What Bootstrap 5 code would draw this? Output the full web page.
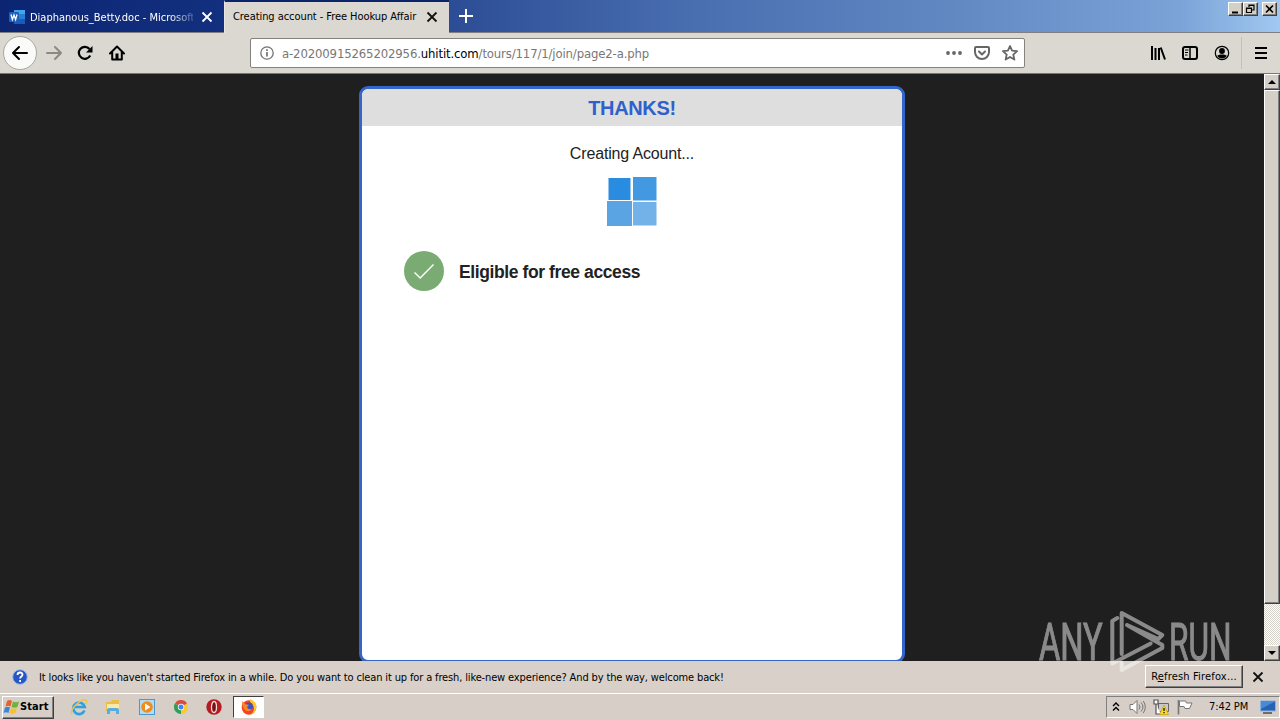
<!DOCTYPE html>
<html lang="en">
<head>
    <meta charset="UTF-8">
    <meta name="viewport" content="width=device-width, initial-scale=1.0">
    <title>Creating account - Free Hookup Affair</title>
    <link href="https://cdn.jsdelivr.net/npm/bootstrap@5.3.0/dist/css/bootstrap.min.css" rel="stylesheet">
    <style>
        body { width: 1280px; height: 720px; overflow: hidden; background: #d6cfc8; color: #000; font: 11px/14px "DejaVu Sans Condensed", "DejaVu Sans", sans-serif; }
        svg { display: block; flex: none; }

        /* tab strip */
        .tabstrip { height: 33px; background: linear-gradient(90deg, #0c2573 0, #12307f 225px, #2c4d95 450px, #4a6fb1 700px, #6288c2 950px, #7ba3d8 1180px, #a0c8f0 1280px); border-bottom: 1px solid #808080; }
        .tab-one { width: 224px; padding: 2px 11px 0 9px; color: #fff; }
        .tab-one .tab-text { width: 163px; margin-left: 5px; padding-top: 1px; letter-spacing: 0; -webkit-mask-image: linear-gradient(90deg, #000 140px, rgba(0,0,0,.25)); }
        .tab-two { width: 225px; height: 33px; padding: 0 11px 2px 8px; background: #dbd7d1; border-top: 2px solid #0a246a; border-left: 1px solid #e9e6e0; }
        .tab-two .tab-text { width: 192px; padding-top: 1px; letter-spacing: -.06px; }
        .tab-text { overflow: hidden; white-space: nowrap; }
        .win-btn { width: 15px; height: 14px; background: #d4d0c8; }
        .raised { border: 1px solid; border-color: #fff #404040 #404040 #fff; box-shadow: inset -1px -1px #808080; }

        /* toolbar */
        .toolbar { height: 40px; background: #dbd7d1; }
        .back-btn { width: 34px; height: 34px; background: #fafaf9; border: 1px solid #aaa7a2; }
        .urlbar { width: 775px; height: 30px; background: #fff; border: 1px solid #85827d; border-radius: 2px; font-size: 13px; color: #777; }
        .url-text { padding-top: 1px; letter-spacing: -.14px; white-space: nowrap; }
        .menu-sep { width: 1px; height: 32px; background: #c3bfb9; }

        /* page */
        .page { height: 588px; background: #1f1f1f; border-top: 1px solid #777; overflow: hidden; }
        .join-box { width: 546px; height: 577px; margin-top: 12px; background: #fff; border: 3px solid #3465c8; border-radius: 9px; font-family: "Liberation Sans", Arial, sans-serif; color: #222; }
        .join-head { height: 37px; background: #dedede; border-radius: 7px 7px 0 0; color: #3060cc; font-size: 20px; line-height: 38px; letter-spacing: -.35px; }
        .join-status { font-size: 16px; line-height: 20px; margin-top: 18px; letter-spacing: -.16px; }
        .join-step { margin: 24px 0 0 42px; font-size: 17.500px; line-height: 22px; letter-spacing: -.4px; gap: 15px; }
        .scroller { width: 16px; background: repeating-conic-gradient(#fff 0 25%, #d6d2cc 0 50%) 0 0 / 2px 2px; }
        .scroll-btn { height: 16px; background: #d4d0c8; }
        .scroll-thumb { height: 514px; background: #d4d0c8; }
        .watermark { position: absolute; left: 1035px; top: 605px; z-index: 5; overflow: visible; }

        /* notification bar and taskbar */
        .notice { height: 32px; background: #d8d0c9; }
        .notice-text { padding-top: 1px; letter-spacing: -.14px; white-space: nowrap; }
        .notice-btn { width: 98px; height: 23px; background: #d8d0c9; }
        .taskbar { height: 27px; border-top: 1px solid #fff; background: #d6cec7; }
        .start-btn { width: 52px; height: 23px; font-weight: bold; letter-spacing: .1px; }
        .task-active { width: 31px; height: 22px; background: #fff; border: 1px solid; border-color: #404040 #fff #fff #404040; }
        .tray { width: 174px; height: 22px; border: 1px solid; border-color: #808080 #fff #fff #808080; }
    </style>
</head>
<body class="d-flex flex-column">

    <div class="tabstrip d-flex flex-shrink-0">
        <div class="tab-one d-flex align-items-center">
            <svg width="16" height="16" viewBox="0 0 16 16">
                <path d="M5 1h11v5H5z" fill="#41a5ee"/><path d="M5 5h11v5H5z" fill="#2b7cd3"/><path d="M5 10h11v5H5z" fill="#185abd"/>
                <rect y="3" width="10" height="10" rx="1" fill="#1c60c0"/>
                <path d="M2 5.500l1.400 5L5 6l1.600 4.500L8 5.500" fill="none" stroke="#fff" stroke-width="1.300"/>
            </svg>
            <div class="tab-text me-auto">Diaphanous_Betty.doc - Microsoft</div>
            <svg width="12" height="12" viewBox="0 0 12 12"><path d="M1.500 1.500l9 9M10.500 1.500l-9 9" stroke="#fff" stroke-width="1.800"/></svg>
        </div>
        <div class="tab-two d-flex align-items-center">
            <div class="tab-text me-auto">Creating account - Free Hookup Affair</div>
            <svg width="12" height="12" viewBox="0 0 12 12"><path d="M1.500 1.500l9 9M10.500 1.500l-9 9" stroke="#111" stroke-width="1.800"/></svg>
        </div>
        <svg width="34" height="32" viewBox="0 0 34 32"><path d="M17 9v14M10 16h14" stroke="#fff" stroke-width="2"/></svg>
        <div class="d-flex ms-auto" style="margin: 2px 3px 0 0">
            <div class="win-btn raised"><svg width="13" height="12"><path d="M3 9.500h6" stroke="#000" stroke-width="2"/></svg></div>
            <div class="win-btn raised"><svg width="13" height="12"><path d="M5 4V2h5v5H8M5 2.500h5M2.500 5h5v4.500h-5zM2.500 5.500h5" fill="none" stroke="#000" stroke-width="1.200"/></svg></div>
            <div class="win-btn raised ms-1"><svg width="13" height="12"><path d="M3 2.500l7 7M10 2.500l-7 7" stroke="#000" stroke-width="1.600"/></svg></div>
        </div>
    </div>

    <div class="toolbar d-flex align-items-center flex-shrink-0">
        <div class="back-btn rounded-circle d-flex align-items-center justify-content-center flex-shrink-0" style="margin-left: 3px">
            <svg width="18" height="16" viewBox="0 0 18 16" fill="none" stroke="#000" stroke-width="2" stroke-linecap="round" stroke-linejoin="round"><path d="M2 8h14M8 2L2 8l6 6"/></svg>
        </div>
        <svg width="18" height="16" viewBox="0 0 18 16" fill="none" stroke="#8b8985" stroke-width="2" stroke-linecap="round" stroke-linejoin="round" style="margin-left: 8px"><path d="M2 8h14M10 2l6 6-6 6"/></svg>
        <svg width="16" height="16" viewBox="0 0 16 16" style="margin-left: 14px"><path d="M13.200 10.500A6 6 0 1 1 12.500 4" fill="none" stroke="#000" stroke-width="2.200"/><path d="M15.500 1v6.500H9z"/></svg>
        <svg width="16" height="16" viewBox="0 0 16 16" style="margin-left: 16px"><path d="M1 8.500L8 1.500l7 7M3.200 7v7.500h9.600V7" fill="none" stroke="#000" stroke-width="2" stroke-linecap="round" stroke-linejoin="round"/><path d="M6.500 8.500h3v6h-3z"/></svg>

        <div class="urlbar d-flex align-items-center flex-shrink-0" style="margin-left: 125px">
            <svg width="14" height="14" viewBox="0 0 14 14" style="margin: 0 8px 0 9px"><circle cx="7" cy="7" r="6.200" fill="none" stroke="#737373" stroke-width="1.300"/><path d="M7 6v4.500M7 3.200v1.700" stroke="#737373" stroke-width="1.700"/></svg>
            <div class="url-text">a-20200915265202956.<span class="text-black">uhitit.com</span>/tours/117/1/join/page2-a.php</div>
            <svg width="16" height="16" viewBox="0 0 16 16" fill="#666" class="ms-auto"><circle cx="2" cy="8" r="1.900"/><circle cx="8" cy="8" r="1.900"/><circle cx="14" cy="8" r="1.900"/></svg>
            <svg width="16" height="16" viewBox="0 0 16 16" fill="none" stroke="#666" stroke-width="2" stroke-linecap="round" stroke-linejoin="round" style="margin: 0 12px"><path d="M2 2h12a1 1 0 0 1 1 1v4a7 7 0 0 1-14 0V3a1 1 0 0 1 1-1z"/><path d="M5 6.500l3 3 3-3"/></svg>
            <svg width="16" height="16" viewBox="0 0 16 16" fill="none" stroke="#666" stroke-width="1.800" stroke-linejoin="round" style="margin-right: 6px"><path d="M8 1l2.100 4.700 5 .5-3.800 3.400 1.100 5L8 12l-4.400 2.600 1.100-5L.9 6.200l5-.5z"/></svg>
        </div>

        <svg width="16" height="16" viewBox="0 0 16 16" fill="none" stroke="#000" stroke-width="2" style="margin-left: 125px"><path d="M2 1v14M5.500 3v12M9 3v12M10.700 2.500L15 14.500"/></svg>
        <svg width="16" height="16" viewBox="0 0 16 16" fill="none" stroke="#000" style="margin-left: 16px"><rect x="1" y="2" width="14" height="12" rx="2" stroke-width="2"/><path d="M8 2v12" stroke-width="1.500"/><path d="M3 5h3.500M3 7.500h3M3 10h2.500" stroke-width="1"/></svg>
        <svg width="16" height="16" viewBox="0 0 16 16" style="margin-left: 16px"><circle cx="8" cy="8" r="6.700" fill="none" stroke="#000" stroke-width="1.200"/><circle cx="8" cy="6" r="2.900"/><path d="M3.200 10.800c2-1.600 7.600-1.600 9.600 0-2 3.600-7.600 3.600-9.600 0z"/></svg>
        <div class="menu-sep" style="margin-left: 11px"></div>
        <svg width="14" height="14" viewBox="0 0 14 14" stroke="#000" stroke-width="2" style="margin-left: 12px"><path d="M1 2h12M1 7h12M1 12h12"/></svg>
    </div>

    <div class="page d-flex flex-shrink-0">
        <div class="flex-grow-1 d-flex justify-content-center">
            <div class="join-box">
                <div class="join-head text-center fw-bold">THANKS!</div>
                <div class="join-status text-center">Creating Acount...</div>
                <svg width="50" height="50" viewBox="0 0 50 50" class="mx-auto" style="margin-top: 13px">
                    <rect x="1.500" y="1" width="22" height="22" fill="#2a8ce0"/><rect x="26" y="0" width="23.500" height="23.500" fill="#4299e1"/>
                    <rect x="0" y="24" width="25" height="25" fill="#5ba4e3"/><rect x="26" y="25" width="23.500" height="23.500" fill="#73b2e8"/>
                </svg>
                <div class="join-step d-flex align-items-center">
                    <svg width="40" height="40" viewBox="0 0 40 40"><circle cx="20" cy="20" r="20" fill="#7aab73"/><path d="M10.500 21.500l5.700 5.500 13.300-13.500" fill="none" stroke="#fff" stroke-width="1.500"/></svg>
                    <div class="fw-bold" style="padding-top: 2px">Eligible for free access</div>
                </div>
            </div>
        </div>
        <div class="scroller d-flex flex-column">
            <div class="scroll-btn raised"><svg width="14" height="14"><path d="M3 9l4-4 4 4z"/></svg></div>
            <div class="scroll-thumb raised"></div>
            <div class="scroll-btn raised mt-auto"><svg width="14" height="14"><path d="M3 5l4 4 4-4z"/></svg></div>
        </div>
    </div>

    <div class="notice d-flex align-items-center flex-shrink-0">
        <svg width="16" height="16" viewBox="0 0 16 16" style="margin: 0 11px 0 12px"><circle cx="8" cy="8" r="7.300" fill="#2456c4" stroke="#9cb9ea" stroke-width="1"/><path d="M5.500 6c0-3.400 5-3.200 5-.3 0 1.800-2.400 1.800-2.400 3.800M8.100 11v1.900" fill="none" stroke="#fff" stroke-width="1.800"/></svg>
        <div class="notice-text">It looks like you haven't started Firefox in a while. Do you want to clean it up for a fresh, like-new experience? And by the way, welcome back!</div>
        <div class="notice-btn raised ms-auto text-center" style="margin-bottom: 2px; line-height: 21px; letter-spacing: .18px">R<u>e</u>fresh Firefox...</div>
        <svg width="12" height="12" viewBox="0 0 12 12" style="margin: 0 16px 0 9px"><path d="M1.500 1.500l9 9M10.500 1.500l-9 9" stroke="#111" stroke-width="1.800"/></svg>
    </div>

    <div class="taskbar d-flex align-items-center flex-shrink-0">
        <div class="start-btn raised d-flex align-items-center" style="margin-left: 2px">
            <svg width="17" height="16" viewBox="0 0 17 16"><path d="M4 2q3-2 5 0L7.500 7.500q-2-1.500-5 0z" fill="#e8602c"/><path d="M10 2.500q3 1.500 6 0L14.500 8q-3 1.500-6 0z" fill="#6cb33f"/><path d="M2 8.500q3-1.500 5 0L5.500 14Q3 12.500.5 14z" fill="#3b86d8"/><path d="M8 9q3 1.500 6 0l-1.500 5q-3 1.500-6 0z" fill="#f8c030"/></svg>
            <span>Start</span>
        </div>
        <svg width="18" height="18" viewBox="0 0 18 18" style="margin-left: 16px"><path d="M14.500 12.500A5.800 5.800 0 1 1 14.800 9H5" fill="none" stroke="#2ba3e3" stroke-width="2.600"/><path d="M2 16C-1 12 11 0 16 2q1.500 1 0 4" fill="none" stroke="#edc34c" stroke-width="1.400"/></svg>
        <svg width="16" height="16" viewBox="0 0 16 16" style="margin-left: 17px"><path d="M1 3h5l1-2h7v11H1z" fill="#e9bd4c"/><path d="M2 5h12v7H2z" fill="#fbe9a8"/><path d="M2 15v-4q0-2 2-2h8q2 0 2 2v4h-3v-3H5v3z" fill="#58ade0"/></svg>
        <svg width="16" height="16" viewBox="0 0 16 16" style="margin-left: 18px"><rect x=".5" y=".5" width="15" height="15" fill="#b4dbf4" stroke="#4a99cf"/><circle cx="8" cy="8" r="5.800" fill="#f28a1c"/><path d="M6 4.500l5.500 3.500L6 11.500z" fill="#fff"/></svg>
        <svg width="14" height="14" viewBox="0 0 14 14" style="margin-left: 19px"><path d="M7 7L.9 3.500A7 7 0 0 1 13.100 3.500z" fill="#dd4b3e"/><path d="M7 7L.9 3.500A7 7 0 0 0 7 14l2.500-5z" fill="#2f9e57"/><path d="M7 7l6.100-3.500A7 7 0 0 1 7 14z" fill="#f7ca35"/><circle cx="7" cy="7" r="3.200" fill="#fff"/><circle cx="7" cy="7" r="2.500" fill="#4385ef"/></svg>
        <svg width="16" height="16" viewBox="0 0 16 16" style="margin-left: 18px"><circle cx="8" cy="8" r="7.700" fill="#b51b20"/><ellipse cx="8" cy="8" rx="2.500" ry="5.500" fill="#791015" stroke="#f5dcdc" stroke-width="1.300"/></svg>
        <div class="task-active d-flex align-items-center justify-content-center" style="margin-left: 11px">
            <svg width="16" height="16" viewBox="0 0 16 16"><circle cx="8" cy="8.500" r="7.300" fill="#f5421f"/><path d="M9 0q6 2 6.500 8-1 7-7 8 6-3 4-9-1-3-3.500-4z" fill="#ffca2b"/><circle cx="7.800" cy="7.500" r="4" fill="#3855c8"/><path d="M1 2l3 3 4 1-2 2q1 3 5 2-3 4-7 1-3-3-3-9z" fill="#ff8420"/></svg>
        </div>
        <div class="tray d-flex align-items-center ms-auto me-0" style="padding-left: 5px">
            <svg width="8" height="10" viewBox="0 0 8 10" fill="none" stroke="#000" stroke-width="1.400"><path d="M1 4l3-3 3 3M1 8.500l3-3 3 3"/></svg>
            <svg width="18" height="16" viewBox="0 0 18 16" fill="none" stroke="#777" style="margin-left: 9px"><path d="M1 5.500h3l4-4v13l-4-4H1z" fill="#fff"/><path d="M10 5.500q2 2.500 0 5M12 3.500q4 4.500 0 9M14.300 2q4 6 0 12"/></svg>
            <svg width="16" height="16" viewBox="0 0 16 16" style="margin-left: 6px"><path d="M5.500 4.500h10v8h-10z" fill="#c9c9c9" stroke="#666"/><path d="M1 1h4v4H1zM3 5v10h5" fill="#fff" stroke="#555" stroke-width="1.200"/><path d="M11 6l4.500 9.500h-9z" fill="#ffdb22" stroke="#cda000" stroke-width=".7"/><path d="M11 9v3M11 13v1.300" stroke="#000" stroke-width="1.200"/></svg>
            <svg width="16" height="16" viewBox="0 0 16 16" style="margin-left: 8px"><path d="M1.500 1v14.500" stroke="#777" stroke-width="1.600"/><path d="M2.500 2h6l1 2h5.500l-2.500 5.500H8l-1-2H2.500z" fill="#fff" stroke="#777"/></svg>
            <div style="margin-left: 16px; letter-spacing: -.1px; white-space: nowrap">7:42 PM</div>
            <svg width="16" height="14" viewBox="0 0 16 14" class="ms-auto" style="margin-right: 3px"><path d="M.5 1h15v10H.5z" fill="#2563b5" stroke="#89b2df"/><path d="M1 1.500h14L1 9z" fill="#488bd4"/><path d="M3 13h9" stroke="#4c4c4c" stroke-width="1.500"/></svg>
        </div>
    </div>

    <svg class="watermark" width="205" height="72" viewBox="0 0 205 72" fill="#fff" opacity=".48" font-family="Roboto, sans-serif" font-size="51">
        <g stroke="#fff" stroke-width="1">
            <text transform="translate(4 54.500) scale(.64 1)">ANY</text>
            <text transform="translate(134 54.500) scale(.62 1)">RUN</text>
        </g>
        <!-- folded ribbon triangle -->
        <path d="M82.300 13l-5 3v42.500l38.400-20M86.700 49V8l40.600 22-4 4-31.300-14M92 20l35.300 20v3L86.700 65v-7" fill="none" stroke="#fff" stroke-width="4" stroke-linecap="round" stroke-linejoin="round"/>
    </svg>

    <script src="https://cdn.jsdelivr.net/npm/bootstrap@5.3.0/dist/js/bootstrap.bundle.min.js"></script>
</body>
</html>
